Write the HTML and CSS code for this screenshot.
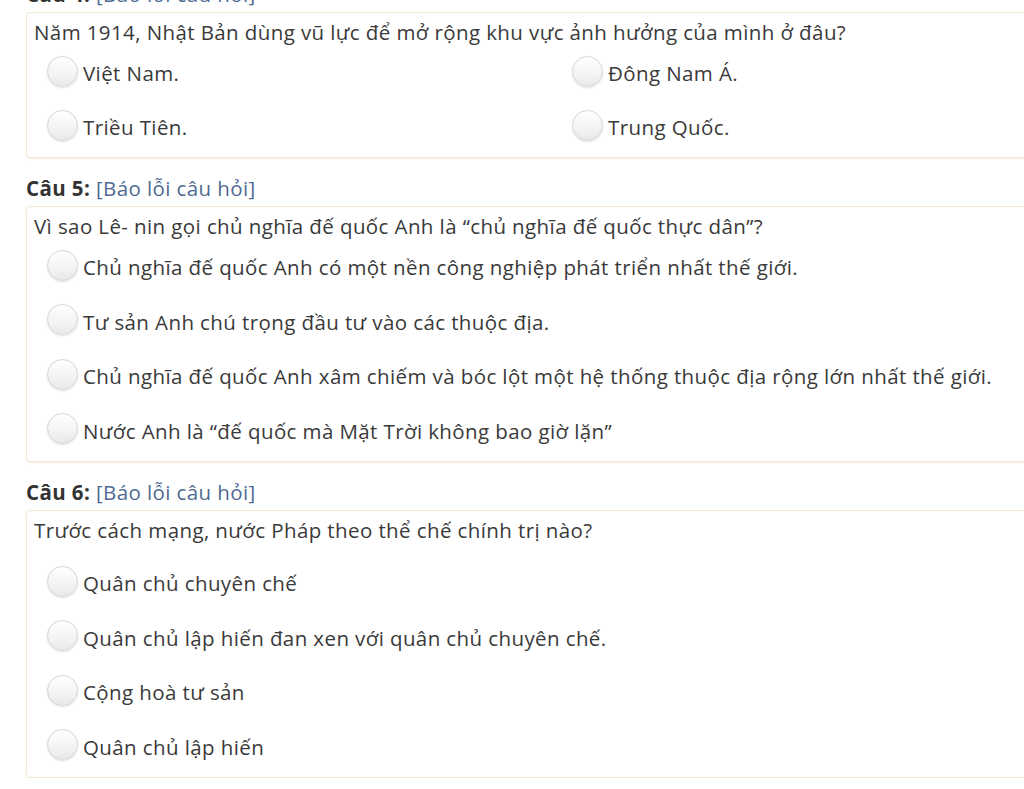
FILE: index.html
```html
<!DOCTYPE html>
<html lang="vi">
<head>
<meta charset="utf-8">
<title>Câu hỏi</title>
<link rel="stylesheet" href="styles.css">
</head>
<body>
<div class="page">
  <div class="q-head first"><b>Câu 4:</b> <a class="report">[Báo lỗi câu hỏi]</a></div>
  <div class="card">
    <div class="q-text">Năm 1914, Nhật Bản dùng vũ lực để mở rộng khu vực ảnh hưởng của mình ở đâu?</div>
    <div class="options two-col">
      <label class="opt"><span class="radio"></span><span>Việt Nam.</span></label>
      <label class="opt"><span class="radio"></span><span>Đông Nam Á.</span></label>
      <label class="opt"><span class="radio"></span><span>Triều Tiên.</span></label>
      <label class="opt"><span class="radio"></span><span>Trung Quốc.</span></label>
    </div>
  </div>

  <div class="q-head"><b>Câu 5:</b> <a class="report">[Báo lỗi câu hỏi]</a></div>
  <div class="card">
    <div class="q-text">Vì sao Lê- nin gọi chủ nghĩa đế quốc Anh là “chủ nghĩa đế quốc thực dân”?</div>
    <div class="options">
      <label class="opt"><span class="radio"></span><span>Chủ nghĩa đế quốc Anh có một nền công nghiệp phát triển nhất thế giới.</span></label>
      <label class="opt"><span class="radio"></span><span>Tư sản Anh chú trọng đầu tư vào các thuộc địa.</span></label>
      <label class="opt"><span class="radio"></span><span>Chủ nghĩa đế quốc Anh xâm chiếm và bóc lột một hệ thống thuộc địa rộng lớn nhất thế giới.</span></label>
      <label class="opt"><span class="radio"></span><span>Nước Anh là “đế quốc mà Mặt Trời không bao giờ lặn”</span></label>
    </div>
  </div>

  <div class="q-head"><b>Câu 6:</b> <a class="report">[Báo lỗi câu hỏi]</a></div>
  <div class="card">
    <div class="q-text spaced">Trước cách mạng, nước Pháp theo thể chế chính trị nào?</div>
    <div class="options">
      <label class="opt"><span class="radio"></span><span>Quân chủ chuyên chế</span></label>
      <label class="opt"><span class="radio"></span><span>Quân chủ lập hiến đan xen với quân chủ chuyên chế.</span></label>
      <label class="opt"><span class="radio"></span><span>Cộng hoà tư sản</span></label>
      <label class="opt"><span class="radio"></span><span>Quân chủ lập hiến</span></label>
    </div>
  </div>
</div>
</body>
</html>
```

FILE: styles.css
```css
html, body {
  margin: 0;
  padding: 0;
  background: #ffffff;
  overflow: hidden;
}

body {
  font-family: "Open Sans", "Liberation Sans", sans-serif;
  font-size: 20.5px;
  letter-spacing: 0.4px;
  color: #3a3a3a;
}

.page {
  padding-left: 26px;
  width: 1110px;
}

.q-head {
  line-height: 24px;
  margin-top: 18px;
  margin-bottom: 6px;
  color: #333;
}

.q-head.first {
  margin-top: -18px;
}

.q-head b {
  font-weight: 700;
}

.report {
  color: #4f6a93;
  cursor: pointer;
}

.card {
  border: 1px solid #f1e5d2;
  border-radius: 4px;
  box-shadow: 0 1px 2px rgba(230, 215, 190, 0.35);
  padding: 0 0 3px 0;
}

.q-text {
  padding: 5px 7px 0 7px;
  line-height: 28px;
}

.q-text.spaced {
  padding-bottom: 12px;
}

.options {
  padding-left: 20px;
  display: flex;
  flex-direction: column;
}

.options.two-col {
  display: grid;
  grid-template-columns: 525px 1fr;
}

.options.two-col .opt {
  height: 54px;
}

.opt {
  display: flex;
  align-items: center;
  gap: 5px;
  height: 54.5px;
}

.radio {
  flex: none;
  width: 29px;
  height: 29px;
  border-radius: 50%;
  border: 1px solid #d6d6d6;
  background: linear-gradient(180deg, #ffffff 0%, #f3f3f3 60%, #e8e8e8 100%);
  box-shadow: 0 1px 2px rgba(0, 0, 0, 0.12);
  transform: translateY(-2px);
}
```
